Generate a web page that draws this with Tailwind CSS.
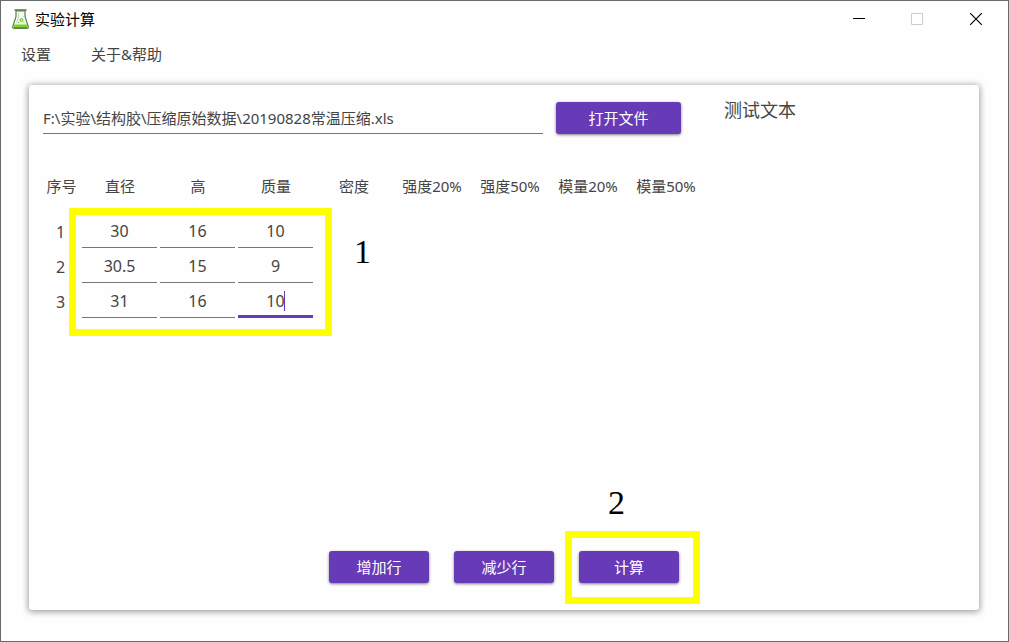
<!DOCTYPE html>
<html lang="zh-CN">
<head>
<meta charset="utf-8">
<title>实验计算</title>
<script src="https://cdn.jsdelivr.net/npm/@tailwindcss/browser@4"></script>
</head>
<body class="min-h-screen flex flex-col border border-[#6a6a6a] bg-[#fefefe] font-['Noto_Sans','Noto_Sans_CJK_SC',sans-serif] text-[15px] leading-5 text-[#444]">
  <header class="flex h-9 items-center justify-between pl-[10px] pr-0.5 text-black">
    <div class="flex items-center gap-1">
      <svg class="h-[22px] w-5" viewBox="0 0 20 22" fill="none" aria-hidden="true">
        <path d="M5 3v5.500L1.800 18.500q-.5 2 1.300 2h12.800q1.800 0 1.300-2L14 8.500V3z" fill="#f6fbf2" stroke="#5f7f52" stroke-width="1.200"/>
        <path d="M3.500 2h12" stroke="#4d7040" stroke-width="1.500"/>
        <path d="M3 16.500h13l.8 3H2.300z" fill="#74d822"/>
        <path d="M2.500 19.500h14" stroke="#4fa51b"/>
        <path d="M7.500 5v4.500L5.500 15" stroke="#c3d3bb"/>
        <circle cx="10.500" cy="12" r="1.500" fill="#c9f3a0" stroke="#66c026"/>
        <path d="M7 14.500h1.500M12.500 8.500h.8M12.500 14.500h1" stroke="#7fce45"/>
      </svg>
      <h1>实验计算</h1>
    </div>
    <div class="flex">
      <button aria-label="最小化" class="flex h-9 w-[58px] items-center justify-center"><svg class="size-3" viewBox="0 0 12 12"><path d="M0 5.500h12" stroke="#000"/></svg></button>
      <button aria-label="最大化" disabled class="flex h-9 w-[58px] items-center justify-center"><svg class="size-3" viewBox="0 0 12 12"><path d="M.5.5h11v11H.5z" fill="none" stroke="#ccc"/></svg></button>
      <button aria-label="关闭" class="flex h-9 w-[60px] items-center justify-center"><svg class="size-3" viewBox="0 0 12 12"><path d="M0 0l12 12M12 0L0 12" stroke="#000" stroke-width="1.200"/></svg></button>
    </div>
  </header>
  <nav class="flex h-[34px] items-center gap-10 px-5">
    <button>设置</button>
    <button>关于&amp;帮助</button>
  </nav>
  <main class="mt-[14px] mr-[29px] mb-[31px] ml-7 flex flex-1 flex-col rounded-[3px] pt-[17px] pb-[27px] shadow-[0_1px_6px_1px_rgba(0,0,0,0.38)]">
    <div class="flex items-start pl-[14px]">
      <input aria-label="文件路径" class="h-8 w-[500px] border-b border-[#757575] outline-none" value="F:\实验\结构胶\压缩原始数据\20190828常温压缩.xls">
      <button class="ml-[13px] h-8 w-[125px] rounded-[3px] bg-[#673ab7] text-white shadow-[0_1px_3px_rgba(0,0,0,0.5)]">打开文件</button>
      <p class="ml-[43px] -mt-1 text-[18px] leading-6">测试文本</p>
    </div>
    <div class="relative mt-[25px] ml-[13px] w-[663px]">
      <table class="w-full table-fixed text-center">
        <thead>
          <tr class="h-[54px]">
            <th class="w-[39px] p-0 font-normal">序号</th>
            <th class="p-0 font-normal">直径</th>
            <th class="p-0 font-normal">高</th>
            <th class="p-0 font-normal">质量</th>
            <th class="p-0 font-normal">密度</th>
            <th class="p-0 font-normal">强度20%</th>
            <th class="p-0 font-normal">强度50%</th>
            <th class="p-0 font-normal">模量20%</th>
            <th class="p-0 font-normal">模量50%</th>
          </tr>
        </thead>
        <tbody class="text-base">
          <tr class="h-[35px]">
            <td class="p-0 pt-0.5 pr-0.5">1</td>
            <td class="p-0 pl-px pr-0.5"><input aria-label="直径 1" value="30" class="block h-[35px] w-full border-b border-[#757575] pt-0.5 text-center outline-none"></td>
            <td class="p-0 pl-px pr-0.5"><input aria-label="高 1" value="16" class="block h-[35px] w-full border-b border-[#757575] pt-0.5 text-center outline-none"></td>
            <td class="p-0 pl-px pr-0.5"><input aria-label="质量 1" value="10" class="block h-[35px] w-full border-b border-[#757575] pt-0.5 text-center outline-none"></td>
            <td></td><td></td><td></td><td></td><td></td>
          </tr>
          <tr class="h-[35px]">
            <td class="p-0 pt-0.5 pr-0.5">2</td>
            <td class="p-0 pl-px pr-0.5"><input aria-label="直径 2" value="30.5" class="block h-[35px] w-full border-b border-[#757575] pt-0.5 text-center outline-none"></td>
            <td class="p-0 pl-px pr-0.5"><input aria-label="高 2" value="15" class="block h-[35px] w-full border-b border-[#757575] pt-0.5 text-center outline-none"></td>
            <td class="p-0 pl-px pr-0.5"><input aria-label="质量 2" value="9" class="block h-[35px] w-full border-b border-[#757575] pt-0.5 text-center outline-none"></td>
            <td></td><td></td><td></td><td></td><td></td>
          </tr>
          <tr class="h-[35px]">
            <td class="p-0 pt-0.5 pr-0.5">3</td>
            <td class="p-0 pl-px pr-0.5"><input aria-label="直径 3" value="31" class="block h-[35px] w-full border-b border-[#757575] pt-0.5 text-center outline-none"></td>
            <td class="p-0 pl-px pr-0.5"><input aria-label="高 3" value="16" class="block h-[35px] w-full border-b border-[#757575] pt-0.5 text-center outline-none"></td>
            <td class="relative p-0 pl-px pr-0.5"><input aria-label="质量 3" value="10" class="block h-[35px] w-full border-b-3 border-[#673ab7] pt-1 text-center outline-none"><span class="absolute top-2 left-[47px] h-5 w-px bg-[#673ab7]"></span></td>
            <td></td><td></td><td></td><td></td><td></td>
          </tr>
        </tbody>
      </table>
      <div class="pointer-events-none absolute top-[49px] left-[27px] h-32 w-[263px] border-7 border-[#ff0]"></div>
      <span class="absolute top-[77px] left-[312px] font-['Liberation_Serif',serif] text-[34px] leading-8 text-black">1</span>
    </div>
    <div class="mt-auto flex justify-center gap-[25px]">
      <button class="h-8 w-[100px] rounded-[3px] bg-[#673ab7] text-white shadow-[0_1px_3px_rgba(0,0,0,0.5)]">增加行</button>
      <button class="h-8 w-[100px] rounded-[3px] bg-[#673ab7] text-white shadow-[0_1px_3px_rgba(0,0,0,0.5)]">减少行</button>
      <div class="relative">
        <button class="h-8 w-[100px] rounded-[3px] bg-[#673ab7] text-white shadow-[0_1px_3px_rgba(0,0,0,0.5)]">计算</button>
        <div class="pointer-events-none absolute -top-5 -right-[21px] -bottom-[21px] -left-[14px] border-7 border-[#ff0]"></div>
        <span class="absolute -top-16 left-[29px] font-['Liberation_Serif',serif] text-[34px] leading-8 text-black">2</span>
      </div>
    </div>
  </main>
</body>
</html>
